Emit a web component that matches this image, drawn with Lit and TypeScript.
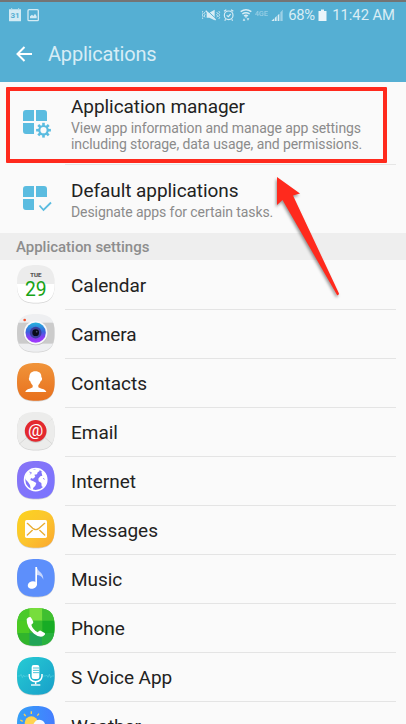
import { LitElement, html, css, svg } from "lit";
import { customElement, property } from "lit/decorators.js";

// Rounded tile outline shared by all launcher icons (viewBox 0 0 114 117).
const TILE = "M56.5 0C97 0 113 14 113 56S97 113 56.5 113 0 98 0 56 16 0 56.5 0Z";

const tile = (fill: string, shade = "#8a8a8a") => svg`
  <path d=${TILE} transform="translate(0 2.5)" fill=${shade} opacity=".35"/>
  <path d=${TILE} fill=${fill}/>`;

const ICONS: Record<string, unknown> = {
  calendar: svg`
    <defs><clipPath id="c"><path d=${TILE}/></clipPath></defs>
    ${tile("#fff")}
    <rect width="114" height="57" fill="#ececec" clip-path="url(#c)"/>
    <text x="56.5" y="36" text-anchor="middle" font-size="18" font-weight="500" fill="#444" stroke="#444" stroke-width=".5" textLength="33" lengthAdjust="spacingAndGlyphs">TUE</text>
    <text x="56.5" y="94" text-anchor="middle" font-size="61" fill="#17a317" textLength="65" lengthAdjust="spacingAndGlyphs">29</text>`,
  camera: svg`
    <defs>
      <clipPath id="c"><path d=${TILE}/></clipPath>
      <linearGradient id="g" x1="0" y1="0" x2="0" y2="1"><stop offset="0" stop-color="#23b4dc"/><stop offset=".45" stop-color="#3a63dc"/><stop offset=".75" stop-color="#8b3cf5"/><stop offset="1" stop-color="#a238ff"/></linearGradient>
    </defs>
    ${tile("#eeeff1")}
    <rect y="26" width="114" height="63" fill="#cbcbcb" clip-path="url(#c)"/>
    <circle cx="56" cy="58" r="36" fill="#bbb"/>
    <circle cx="56" cy="56" r="35.500" fill="#f8f8fb"/>
    <circle cx="56" cy="56" r="30.500" fill="url(#g)"/>
    <circle cx="56" cy="56" r="17.500" fill="#3c3f9b"/>
    <circle cx="56" cy="56" r="10" fill="#090b18"/>
    <circle cx="59" cy="53" r="2.500" fill="#4a4a70"/>
    <circle cx="23" cy="18" r="4" fill="#f4502c"/>`,
  contacts: svg`
    <defs><linearGradient id="g" x1="0" y1="0" x2="0" y2="1"><stop stop-color="#f0943a"/><stop offset="1" stop-color="#e8701d"/></linearGradient></defs>
    ${tile("url(#g)")}
    <path d="M55 25C67 25 74 32 73 43C77 45 75 54 71 55C69 61 66 64 64 67V73C71 78 86 78 88 87H25C27 78 41 78 47 73V67C44 64 41 60 40 55C36 54 34 46 37 43C37 32 43 25 55 25Z" fill="#fff"/>`,
  email: svg`
    ${tile("#ececeb")}
    <path d="M7 20L56 62L106 20M7 96L42 65M106 96L70 65" fill="none" stroke="#cfcfcd" stroke-width="2"/>
    <path d="M9 21L56 62L104 21" fill="none" stroke="#fff" stroke-width="1.500"/>
    <circle cx="56" cy="59" r="33" fill="#aaa" opacity=".5"/>
    <circle cx="56" cy="56.500" r="32.500" fill="#e3282e"/>
    <text x="56" y="72" text-anchor="middle" font-size="51" fill="#fff">@</text>`,
  internet: svg`
    <defs><linearGradient id="g" x1="0" y1="0" x2="1" y2="1"><stop stop-color="#8874f6"/><stop offset="1" stop-color="#7a74ff"/></linearGradient></defs>
    ${tile("url(#g)")}
    <circle cx="56" cy="56" r="33.500" fill="none" stroke="#fff" stroke-width="4.500"/>
    <path d="M31 33L45 23L51 27L59 23L67 24L68 30L62 34L60 40L52 41L55 47L48 53L42 51L40 57L49 61L58 66L55 74L49 80L47 88L41 84L39 72L33 63L25 55L24 47Z" fill="#fff"/>
    <path d="M73 32L80 31L88 43L90 57L85 72L79 79L74 76L73 66L65 61L64 53L70 46L76 44Z" fill="#fff"/>
    <path d="M37 33L43 35L40 40M78 52L83 55" stroke="#8074fa" stroke-width="2.500" fill="none"/>`,
  messages: svg`
    <defs><linearGradient id="g" x1="0" y1="0" x2="1" y2="1"><stop stop-color="#fcd31e"/><stop offset=".5" stop-color="#fcc62d"/><stop offset="1" stop-color="#fba62f"/></linearGradient></defs>
    ${tile("url(#g)")}
    <rect x="24" y="30" width="66" height="54" rx="5" fill="#fff"/>
    <path d="M31 40L47 55Q57 63 66 55L83 40M31 75L46 61M83 75L68 61" fill="none" stroke="#e9ad32" stroke-width="4" stroke-linecap="round"/>`,
  music: svg`
    ${tile("#5d8ffb")}
    <path d="M55 24H60V79H55Z" fill="#fff"/>
    <path d="M60 24C61 40 80 37 79 62C74 50 67 49 60 48Z" fill="#c5d6fd"/>
    <ellipse cx="46" cy="78" rx="14" ry="11" transform="rotate(-18 46 78)" fill="#fff"/>`,
  phone: svg`
    <defs><clipPath id="c"><path d=${TILE}/></clipPath></defs>
    ${tile("#3bbf2b")}
    <g clip-path="url(#c)">
      <path d="M0 0H37V38H0Z" fill="#4bca2c"/><path d="M37 0H76V38H37Z" fill="#77dd3c"/><path d="M76 0H114V38H76Z" fill="#40bf30"/>
      <path d="M0 38H37V75H0Z" fill="#4ccb23"/><path d="M37 38H76V75H37Z" fill="#38bd2e"/><path d="M76 38H114V75H76Z" fill="#17ac25"/>
      <path d="M0 75H37V114H0Z" fill="#31b52c"/><path d="M37 75H76V114H37Z" fill="#20a457"/><path d="M76 75H114V114H76Z" fill="#28b13f"/>
    </g>
    <path d="M29 33Q34 26 40 27Q43 28 49 42Q50 45 43 50Q46 63 62 73Q68 66 71 68L83 75Q87 79 78 85Q68 90 51 77Q28 58 29 33Z" fill="#fff"/>`,
  voice: svg`
    <defs><linearGradient id="g" x1="0" y1="0" x2="1" y2="1"><stop stop-color="#26cbd4"/><stop offset="1" stop-color="#189fc9"/></linearGradient></defs>
    ${tile("url(#g)")}
    <path d="M1 57H9L12 52L16 62L20 54L23 60L26 57H34M78 57H86L89 54L93 61L97 52L101 62L104 57H112" fill="none" stroke="#5fd3e0" stroke-width="1.600"/>
    <rect x="44" y="24" width="23" height="42" rx="6" fill="#fff"/>
    <path d="M48 33H67M48 40H67M48 47H67" stroke="#24b7cf" stroke-width="2.500"/>
    <path d="M37 51V58Q39 73 56 74Q73 73 75 58V51M56 74V82" fill="none" stroke="#fff" stroke-width="4.500"/>
    <path d="M42 84H70" stroke="#fff" stroke-width="4"/>`,
  weather: svg`
    <defs><linearGradient id="g" x1="0" y1="0" x2="1" y2="0"><stop stop-color="#35a0f8"/><stop offset="1" stop-color="#447dff"/></linearGradient></defs>
    ${tile("url(#g)")}
    <path d="M43 16V24M21 24L26 30M66 23L61 29M10 42L17 46" stroke="#ffcf4a" stroke-width="4"/>
    <circle cx="43" cy="51" r="20" fill="#ffd34f"/>
    <path d="M35 75Q36 58 48 57Q55 40 68 41Q82 42 85 58Q98 60 98 75Z" fill="#f5f9ff"/>`,
};

@customElement("app-tile")
class AppTile extends LitElement {
  @property() name = "";
  static styles = css`
    :host { display: block; width: 38px; height: 39px; }
    svg { display: block; width: 38px; height: 39px; font-family: Roboto, sans-serif; }
  `;
  render() {
    return html`<svg viewBox="0 0 114 117">${ICONS[this.name]}</svg>`;
  }
}

@customElement("status-bar")
class StatusBar extends LitElement {
  static styles = css`
    :host { display: flex; height: 26px; align-items: center; padding: 0 11px 0 9px; color: #d9edf5; font: 14.8px/26px Roboto, sans-serif; }
    svg { display: block; flex: none; }
    .pct { width: 27px; margin-left: 4px; white-space: nowrap; letter-spacing: -0.4px; }
    .battery { margin-left: 3px; }
    .time { margin-left: 5px; white-space: nowrap; letter-spacing: -0.05px; }
    .spacer { flex: 1; }
  `;
  render() {
    return html`
      <svg width="30" height="14" viewBox="0 0 90 42">
        <path d="M0 4H36V38Q36 40 34 40H2Q0 40 0 38Z" fill="#d3ebf4"/>
        <path d="M8 0V7M29 0V7" stroke="#b5dcea" stroke-width="3"/>
        <text x="18" y="31" text-anchor="middle" font-size="24" font-weight="700" fill="#55afd3">31</text>
        <rect x="57" y="5" width="31" height="33" rx="3" fill="none" stroke="#d3ebf4" stroke-width="4"/>
        <path d="M63 31V25L69 20L73 24L78 17L83 25V31Z" fill="#d3ebf4"/>
      </svg>
      <span class="spacer"></span>
      <svg width="82" height="14" viewBox="0 0 246 42" fill="#d9edf5" stroke="#d9edf5">
        <g fill="none" stroke-width="2.500"><path d="M3 9L0 13L3 17L0 21L3 25L0 29L3 33M9 12L6 16L9 20L6 24L9 28M44 12L47 16L44 20L47 24L44 28M50 9L53 13L50 17L53 21L50 25L53 29L50 33"/></g>
        <path d="M14 14H22L38 5V37L22 29H14Z" stroke="none"/>
        <path d="M14 6L43 33" stroke="#55afd3" stroke-width="3"/><path d="M11 8L41 36" stroke-width="4"/>
        <g fill="none" stroke-width="3.500"><circle cx="80" cy="22" r="13"/><path d="M74 22L79 26L86 18M66 10L73 5M94 10L87 5M71 34L68 38M89 34L92 38"/></g>
        <g fill="none" stroke-width="4.500"><path d="M116 11Q132 0 148 11M121 18Q132 10 143 18M126 24Q132 20 138 24"/></g>
        <path d="M128 25H136L132 31ZM122 38L126 31L130 38ZM134 31H142L138 38Z" stroke="none"/>
        <text x="159" y="23" font-size="20" font-weight="500" stroke="none" opacity=".5" textLength="39" lengthAdjust="spacingAndGlyphs">4GE</text>
        <g stroke="none"><path d="M208 39L217 31V39ZM219 29L224 24V39H219ZM227 22L232 17V39H227Z"/><path d="M235 13L240 8V39H235ZM241 7L243 5V39H241Z" opacity=".55"/></g>
      </svg>
      <span class="pct">68%</span>
      <svg class="battery" width="9" height="13" viewBox="0 0 9 13"><path d="M3 .5H6V2H8.500V12H.5V2H3Z" fill="#eaf5fa"/></svg>
      <span class="time">11:42 AM</span>`;
  }
}

const APPS: [string, string][] = [
  ["calendar", "Calendar"], ["camera", "Camera"], ["contacts", "Contacts"],
  ["email", "Email"], ["internet", "Internet"], ["messages", "Messages"],
  ["music", "Music"], ["phone", "Phone"], ["voice", "S Voice App"], ["weather", "Weather"],
];

const SQUARES = svg`<path d="M3 0H11V11H0V3Q0 0 3 0ZM13 0H21Q24 0 24 3V11H13ZM0 13H11V24H3Q0 24 0 21Z"/>`;

// Eight gear teeth, one every 45 degrees.
const TEETH = [0, 45, 90, 135, 180, 225, 270, 315].map(
  (a) => svg`<rect x="19.200" y="12.800" width="2.600" height="3.500" transform="rotate(${a} 20.500 20.200)"/>`,
);

@customElement("app-root")
class AppRoot extends LitElement {
  static styles = css`
    :host { display: block; position: relative; width: 406px; height: 724px; overflow: hidden; background: #fafafa; font-family: Roboto, sans-serif; color: #222; }
    header { box-sizing: border-box; height: 81.5px; border-top: 2px solid #747474; background: #55afd3; }
    .bar { display: flex; align-items: center; height: 52px; padding: 0 0 0 16px; gap: 16px; color: #d7edf6; font-size: 20px; letter-spacing: -0.2px; }
    .bar svg { display: block; }
    .entry { display: flex; box-sizing: border-box; padding-left: 23px; }
    .manager { height: 82.500px; padding-top: 14.500px; }
    .default { height: 69px; padding-top: 15px; border-top: 1px solid #e6e6e6; margin-left: 65px; margin-right: 10px; padding-left: 0; }
    .glyph { flex: none; width: 29px; height: 30px; margin: 14px 19px 0 0; fill: #5bbce0; }
    .default .glyph { margin: 6px 19px 0 -42px; }
    .title { font-size: 19px; line-height: 22px; white-space: nowrap; letter-spacing: -0.06px; }
    .desc { font-size: 14px; line-height: 16px; color: #8b8b8b; white-space: nowrap; letter-spacing: -0.09px; }
    .manager .desc { margin-top: 2px; }
    .default .desc { margin-top: 2px; }
    .section { height: 27px; line-height: 28px; padding-left: 16px; margin-bottom: 1px; background: #eee; color: #8d8d8d; font-size: 15px; font-weight: 500; letter-spacing: -0.02px; }
    .row { display: flex; height: 49px; padding-left: 17px; }
    app-tile { flex: none; margin-top: 4px; }
    .label { box-sizing: border-box; flex: 1; margin: 0 10px 0 10px; padding-left: 6px; border-bottom: 1px solid #e4e4e4; font-size: 19px; line-height: 49px; letter-spacing: -0.03px; }
    .marker { position: absolute; left: 6px; top: 87px; width: 381px; height: 76px; box-sizing: border-box; border: 4px solid #ff2a1d; border-radius: 1px; }
    .arrow { position: absolute; left: 270px; top: 170px; filter: drop-shadow(-1px 2px 1.500px rgba(0, 0, 0, .4)); }
  `;
  render() {
    return html`
      <header>
        <status-bar></status-bar>
        <div class="bar">
          <svg width="16" height="16" viewBox="0 0 16 16" fill="none" stroke="#fff" stroke-width="2"><path d="M16 8H1.500M8.500 1L1.500 8L8.500 15"/></svg>
          <span>Applications</span>
        </div>
      </header>
      <div class="entry manager">
        <svg class="glyph" viewBox="0 0 29 30">${SQUARES}
          <circle cx="20.500" cy="20.200" r="8" fill="#fafafa"/>
          <circle cx="20.500" cy="20.200" r="4.200" fill="none" stroke="#5bbce0" stroke-width="2.200"/>
          ${TEETH}
        </svg>
        <div><div class="title">Application manager</div>
          <div class="desc">View app information and manage app settings<br>including storage, data usage, and permissions.</div></div>
      </div>
      <div class="entry default">
        <svg class="glyph" viewBox="0 0 29 30">${SQUARES}
          <path d="M16.500 19.500L20.500 24L28 16.500" fill="none" stroke="#5bbce0" stroke-width="1.800"/>
        </svg>
        <div><div class="title">Default applications</div>
          <div class="desc">Designate apps for certain tasks.</div></div>
      </div>
      <div class="section">Application settings</div>
      ${APPS.map(([icon, label]) => html`<div class="row"><app-tile name=${icon}></app-tile><div class="label">${label}</div></div>`)}
      <div class="marker"></div>
      <svg class="arrow" width="75" height="130" viewBox="270 170 75 130"><path d="M277 177L300 193.500L293 195.500L339 293.500Q338.500 296 337 295L282.500 200L277 205Z" fill="#ff2a1d"/></svg>`;
  }
}
